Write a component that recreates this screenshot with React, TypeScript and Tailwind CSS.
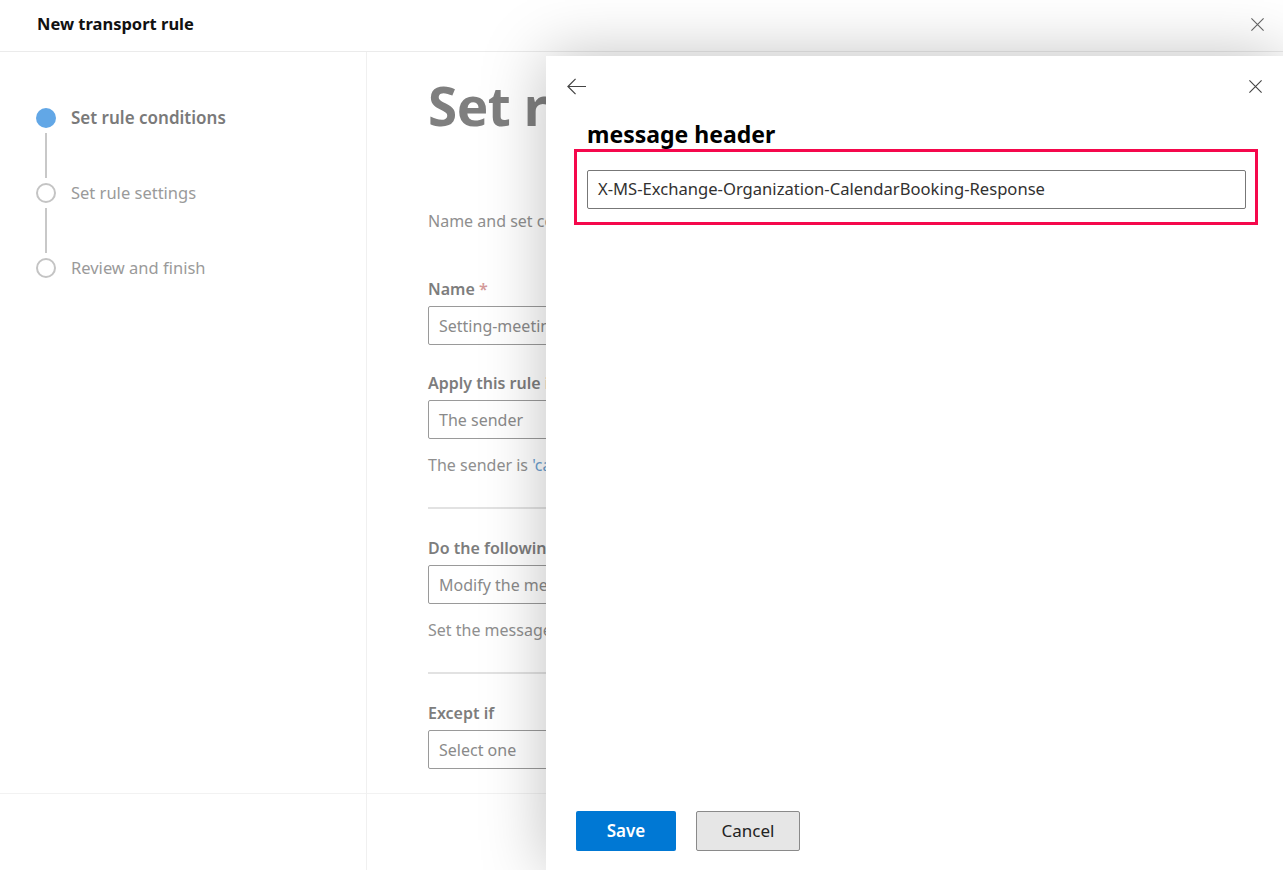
import { ReactNode } from 'react'

const steps = [
	{ label: 'Set rule conditions', active: true },
	{ label: 'Set rule settings', active: false },
	{ label: 'Review and finish', active: false },
]

function CloseIcon({ className }: { className?: string }) {
	return (
		<svg viewBox="0 0 16 16" className={className} fill="none" stroke="currentColor" strokeWidth={1.2}>
			<path d="M1.5 1.5l13 13M14.5 1.5l-13 13" />
		</svg>
	)
}

function BackIcon({ className }: { className?: string }) {
	return (
		<svg viewBox="0 0 22 20" className={className} fill="none" stroke="currentColor" strokeWidth={1.3}>
			<path d="M21 10H2M10 2l-8 8 8 8" />
		</svg>
	)
}

function Field({ label, value, required }: { label: string; value: string; required?: boolean }) {
	return (
		<div>
			<div className="text-[16px] font-semibold text-[#7d7d7d] leading-[22px]">
				{label}
				{required && <span className="text-[#d49a9a]"> *</span>}
			</div>
			<div className="mt-[6px] h-[39px] w-[560px] border border-[#9a9a9a] rounded-[2px] flex items-center px-[10px] text-[16px] text-[#8a8a8a]">
				{value}
			</div>
		</div>
	)
}

function Note({ children }: { children: ReactNode }) {
	return <p className="mt-[15px] text-[16px] text-[#8f8f8f] leading-[22px]">{children}</p>
}

export default function App() {
	return (
		<div className="relative h-[870px] w-full overflow-hidden bg-white font-['Noto_Sans','Open_Sans',sans-serif]">
			{/* Header */}
			<div className="h-[52px] border-b border-[#ebebeb] flex items-center justify-between pl-[37px] pr-[18px] pb-[2px]">
				<h1 className="text-[16.5px] font-bold text-[#111]">New transport rule</h1>
				<CloseIcon className="w-[15px] h-[15px] text-[#666]" />
			</div>

			{/* Body */}
			<div className="flex h-[818px]">
				{/* Step nav */}
				<div className="w-[367px] border-r border-[#f0f0f0] flex flex-col">
					<div className="flex-1 pl-[36px] pt-[56px]">
						{steps.map((step, i) => (
							<div key={step.label}>
								<div className="flex items-center gap-[15px] h-[20px]">
									{step.active ? (
										<div className="w-[20px] h-[20px] rounded-full bg-[#62a7e6]" />
									) : (
										<div className="w-[20px] h-[20px] rounded-full border-2 border-[#c4c4c4]" />
									)}
									<span
										className={
											step.active
												? 'text-[17px] font-semibold text-[#7a7a7a]'
												: 'text-[16.5px] text-[#9a9a9a]'
										}
									>
										{step.label}
									</span>
								</div>
								{i < steps.length - 1 && <div className="ml-[9px] my-[5px] w-[2px] h-[45px] bg-[#c8c8c8]" />}
							</div>
						))}
					</div>
					<div className="h-[77px] border-t border-[#f2f2f2]" />
				</div>

				{/* Main form */}
				<div className="flex-1 flex flex-col">
					<div className="flex-1 pl-[61px] pt-[20px]">
						<h2 className="text-[53px] font-bold text-[#7f7f7f] leading-[68px] tracking-[-0.5px]">Set rule conditions</h2>
						<p className="mt-[70px] text-[16px] text-[#8f8f8f] leading-[22px]">
							Name and set conditions for your transport rule
						</p>
						<div className="mt-[46px] flex flex-col">
							<Field label="Name" value="Setting-meeting-header" required />
							<div className="mt-[27px]">
								<Field label="Apply this rule if..." value="The sender" />
							</div>
							<Note>
								The sender is <span className="text-[#6d9fd0]">'calendar@contoso.com'</span>
							</Note>
							<div className="mt-[31px] w-[560px] h-[2px] bg-[#e2e2e2]" />
							<div className="mt-[28px]">
								<Field label="Do the following" value="Modify the message properties" />
							</div>
							<Note>Set the message header 'X-MS-Exchange-Organization-CalendarBooking-Response'</Note>
							<div className="mt-[31px] w-[560px] h-[2px] bg-[#e2e2e2]" />
							<div className="mt-[28px]">
								<Field label="Except if" value="Select one" />
							</div>
						</div>
					</div>
					<div className="h-[77px] border-t border-[#f2f2f2]" />
				</div>
			</div>

			{/* Side panel overlay */}
			<div className="absolute left-[546px] top-[56px] right-0 bottom-0 bg-white shadow-[0_0_60px_rgba(0,0,0,0.25)] flex flex-col">
				<div className="flex items-center justify-between h-[60px] pl-[20px] pr-[20px]">
					<BackIcon className="w-[21px] h-[19px] text-[#444]" />
					<CloseIcon className="w-[15px] h-[15px] text-[#444]" />
				</div>
				<h3 className="ml-[41px] text-[23px] font-bold text-black leading-[30px] mt-[3px]">message header</h3>
				<div className="ml-[28px] mr-[25px] border-[3px] border-[#f5084c] pt-[18px] pb-[13px] pl-[10px] pr-[9px]">
					<div className="h-[39px] border border-[#777] rounded-[2px] flex items-center px-[10px] text-[16.6px] text-[#323130]">
						X-MS-Exchange-Organization-CalendarBooking-Response
					</div>
				</div>
				<div className="flex-1" />
				<div className="flex gap-[20px] pl-[30px] pb-[19px]">
					<button className="w-[100px] h-[40px] rounded-[2px] bg-[#0078d4] text-white text-[17px] font-semibold">
						Save
					</button>
					<button className="w-[104px] h-[40px] rounded-[2px] bg-[#e6e6e6] border border-[#8a8a8a] text-[#222] text-[17px]">
						Cancel
					</button>
				</div>
			</div>
		</div>
	)
}
